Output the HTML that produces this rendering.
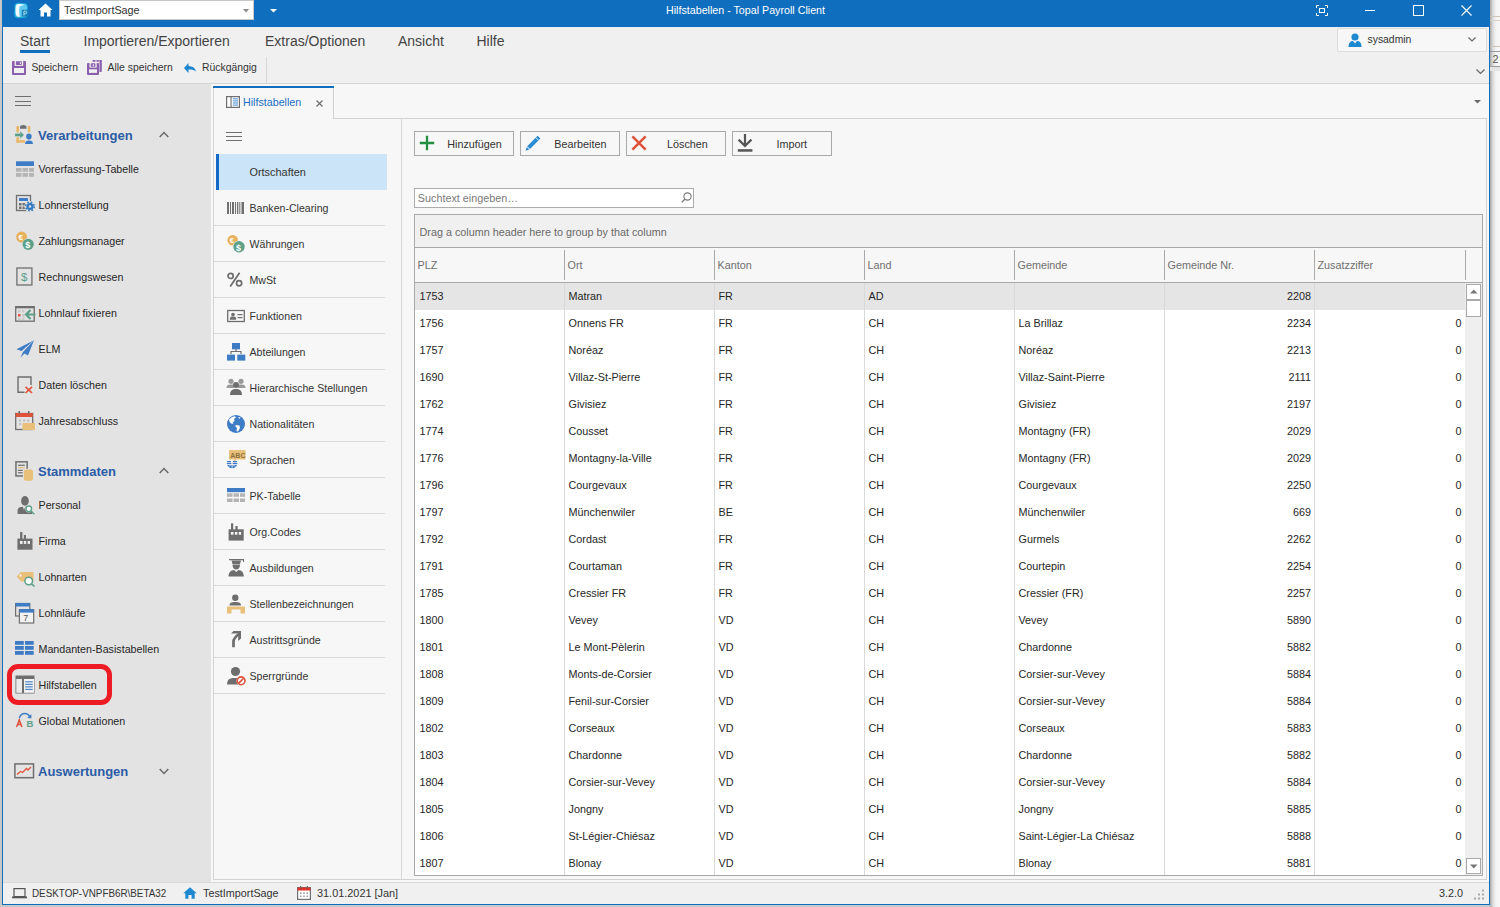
<!DOCTYPE html><html><head><meta charset="utf-8"><style>
html,body{margin:0;padding:0;width:1500px;height:907px;overflow:hidden;position:relative;font-family:"Liberation Sans",sans-serif}
.t{position:absolute;white-space:pre;line-height:1;}
svg{overflow:visible}
</style></head><body>
<div style="position:absolute;left:0px;top:0px;width:1500px;height:907px;background:#c8c8c8"></div>
<div style="position:absolute;left:1490px;top:0px;width:10px;height:907px;background:linear-gradient(to right,#a8a8a8,#dedede 3px,#f3f3f3 6px,#f8f8f8)"></div>
<div style="position:absolute;left:1490px;top:16px;width:10px;height:1px;background:#cfc6b8"></div>
<div style="position:absolute;left:1490px;top:20px;width:10px;height:1px;background:#d8d0c4"></div>
<div style="position:absolute;left:1490px;top:46px;width:10px;height:1px;background:#cfc6b8"></div>
<div style="position:absolute;left:1490px;top:51px;width:10px;height:1px;background:#9a9a9a"></div>
<div class="t" style="left:1492.5px;top:53.86px;font-size:10.8px;color:#555;font-weight:400;">2</div>
<div style="position:absolute;left:1490px;top:66px;width:10px;height:1px;background:#9a9a9a"></div>
<div style="position:absolute;left:1490px;top:67px;width:10px;height:4px;background:#e4e4e4"></div>
<div style="position:absolute;left:2px;top:0px;width:1488px;height:905px;background:#106ebe"></div>
<div style="position:absolute;left:3px;top:27px;width:1486px;height:56px;background:#f0f0f0"></div>
<div style="position:absolute;left:3px;top:83px;width:1486px;height:1px;background:#d4d4d4"></div>
<div style="position:absolute;left:3px;top:84px;width:1486px;height:798px;background:#f7f7f7"></div>
<div style="position:absolute;left:3px;top:84px;width:208px;height:798px;background:#e3e3e3"></div>
<div style="position:absolute;left:3px;top:882px;width:1486px;height:1px;background:#d9d9d9"></div>
<div style="position:absolute;left:3px;top:883px;width:1486px;height:21px;background:#f0f0f0"></div>
<svg style="position:absolute;left:13px;top:2px" width="17" height="17" viewBox="0 0 17 17"><path d="M1.5 4 C1.5 1.5 3.5 0.5 6 0.8 L12 1.2 C14 1.4 14.8 2.8 14.8 5 V12 C14.8 15 13 16 10.5 16 H5 C2.5 16 1.2 15 1.2 12 Z" fill="#1fa9de"/>
<path d="M2.5 4.5 C2.5 2.5 4 1.8 6 1.8 L11.5 2.2 C13.2 2.4 13.8 3.5 13.8 5.2 V11 C13.8 13.8 12.5 15 10 15 H5.5 C3.2 15 2.3 14 2.3 11.5 Z" fill="#62c9ef"/>
<path d="M2.8 4 C3.5 2 5 1.8 7 2 L11.5 2.8 C10 3.5 8 3.8 6.5 4.5 C6 8 6 11 6.8 14.8 C5 15 3.5 14.5 3 12.5 C2.5 10 2.5 6 2.8 4 Z" fill="#f2fbfe"/>
<rect x="8.8" y="7.8" width="6.5" height="6.8" fill="#0f7fb5"/><path d="M10.9 13.6 V9.2 H12.4 C13.3 9.2 13.7 9.8 13.7 10.5 C13.7 11.2 13.3 11.8 12.4 11.8 H10.9" stroke="#bfe6f7" stroke-width="0.9" fill="none"/></svg>
<svg style="position:absolute;left:38px;top:3px" width="15" height="14" viewBox="0 0 15 14"><path d="M7.5 0.5 L14.5 7 L12.5 7 L12.5 13.5 L9 13.5 L9 9.5 L6 9.5 L6 13.5 L2.5 13.5 L2.5 7 L0.5 7 Z" fill="#fff"/></svg>
<div style="position:absolute;left:59px;top:0px;width:195px;height:20px;background:#fff;border:1px solid #c9c9c9;box-sizing:border-box"></div>
<div class="t" style="left:64px;top:4.86px;font-size:10.8px;color:#333;font-weight:400;">TestImportSage</div>
<svg style="position:absolute;left:243px;top:9px" width="6" height="4" viewBox="0 0 6 4"><path d="M0 0 L6 0 L3 3.5 Z" fill="#8a8a8a"/></svg>
<svg style="position:absolute;left:270px;top:9px" width="7" height="4" viewBox="0 0 7 4"><path d="M0 0 L7 0 L3.5 3.5 Z" fill="#fff"/></svg>
<div class="t" style="left:666px;top:4.94px;font-size:10.7px;color:#fff;font-weight:400;">Hilfstabellen - Topal Payroll Client</div>
<svg style="position:absolute;left:1316px;top:5px" width="12" height="11" viewBox="0 0 12 11"><path d="M0.5 3V0.5H3 M9 0.5H11.5V3 M11.5 8V10.5H9 M3 10.5H0.5V8" stroke="#fff" fill="none"/><rect x="3.5" y="3.5" width="5" height="4" stroke="#fff" fill="none"/></svg>
<div style="position:absolute;left:1365px;top:10px;width:10px;height:1px;background:#fff"></div>
<svg style="position:absolute;left:1413px;top:5px" width="11" height="11" viewBox="0 0 11 11"><rect x="0.5" y="0.5" width="10" height="10" stroke="#fff" fill="none"/></svg>
<svg style="position:absolute;left:1461px;top:5px" width="11" height="11" viewBox="0 0 11 11"><path d="M0.5 0.5L10.5 10.5M10.5 0.5L0.5 10.5" stroke="#fff" stroke-width="1.1" fill="none"/></svg>
<div class="t" style="left:20px;top:34.15px;font-size:14px;color:#444;font-weight:400;">Start</div>
<div style="position:absolute;left:20px;top:50px;width:30px;height:3px;background:#106ebe"></div>
<div class="t" style="left:83.5px;top:34.15px;font-size:14px;color:#444;font-weight:400;">Importieren/Exportieren</div>
<div class="t" style="left:265px;top:34.15px;font-size:14px;color:#444;font-weight:400;">Extras/Optionen</div>
<div class="t" style="left:398px;top:34.15px;font-size:14px;color:#444;font-weight:400;">Ansicht</div>
<div class="t" style="left:476.5px;top:34.15px;font-size:14px;color:#444;font-weight:400;">Hilfe</div>
<div style="position:absolute;left:1337px;top:28px;width:150px;height:24px;background:#f7f7f7;border:1px solid #dcdcdc;box-sizing:border-box;border-radius:2px"></div>
<svg style="position:absolute;left:1348px;top:33px" width="14" height="14" viewBox="0 0 14 14"><circle cx="7" cy="4" r="3.6" fill="#1e88d0"/><path d="M0.5 14 C0.5 9 3 8 5 8 L9 8 C11 8 13.5 9 13.5 14 Z" fill="#1e88d0"/><path d="M5 8 L7 10.5 L9 8" fill="#f7f7f7"/></svg>
<div class="t" style="left:1367.5px;top:35.20px;font-size:10.4px;color:#333;font-weight:400;">sysadmin</div>
<svg style="position:absolute;left:1468px;top:37px" width="8" height="5" viewBox="0 0 8 5"><path d="M0.5 0.5 L4 4 L7.5 0.5" stroke="#666" fill="none" stroke-width="1.2"/></svg>
<svg style="position:absolute;left:12px;top:61px" width="14" height="14" viewBox="0 0 14 14"><path d="M1.5 0 H13 A1 1 0 0 1 14 1 V13 A1 1 0 0 1 13 14 H1 A1 1 0 0 1 0 13 V1 A1 1 0 0 1 1 0 Z" fill="#8c5fae"/><rect x="2.6" y="0" width="8.6" height="4.9" fill="#f0f0f0"/><rect x="3.9" y="0.3" width="5.9" height="3.6" rx="0.6" fill="#8c5fae"/><rect x="7.8" y="1.2" width="1.1" height="1.9" fill="#f0f0f0"/><rect x="2" y="7" width="10" height="5" fill="#f0f0f0"/></svg>
<div class="t" style="left:31.5px;top:63.28px;font-size:10.3px;color:#333;font-weight:400;">Speichern</div>
<svg style="position:absolute;left:87px;top:60px" width="15" height="15" viewBox="0 0 15 15"><path d="M5.6 0 H8.5 V1.8 H5.6 Z M9.5 0 H11.8 V1.8 H9.5 Z M12.3 0 H14.8 V11 A1 1 0 0 1 13.8 12 H12.5 V1.8 Z" fill="#8c5fae"/><path d="M1 3 H11 A1 1 0 0 1 12 4 V13.9 A1 1 0 0 1 11 14.9 H1 A1 1 0 0 1 0 13.9 V4 A1 1 0 0 1 1 3 Z" fill="#8c5fae"/><rect x="2.5" y="3" width="7.2" height="4.6" fill="#f0f0f0"/><rect x="3.8" y="3.3" width="4.6" height="3.5" rx="0.5" fill="#8c5fae"/><rect x="5.8" y="4.2" width="1.1" height="1.8" fill="#f0f0f0"/><rect x="2" y="9.3" width="8" height="3.6" fill="#f0f0f0"/></svg>
<div class="t" style="left:107.5px;top:63.20px;font-size:10.4px;color:#333;font-weight:400;">Alle speichern</div>
<svg style="position:absolute;left:184px;top:63px" width="12" height="10" viewBox="0 0 12 10"><path d="M0 5 L4.5 0 L4.5 3 C8 3.2 11 4.5 12 8.5 C10 6.8 7.5 6.5 4.5 6.6 L4.5 9.9 Z" fill="#1c86d0"/></svg>
<div class="t" style="left:202px;top:63.20px;font-size:10.4px;color:#333;font-weight:400;">Rückgängig</div>
<div style="position:absolute;left:266px;top:57px;width:1px;height:26px;background:#d6d6d6"></div>
<svg style="position:absolute;left:1476px;top:68.5px" width="9" height="6" viewBox="0 0 9 6"><path d="M0.5 0.5 L4.5 4.5 L8.5 0.5" stroke="#666" fill="none" stroke-width="1.2"/></svg>
<div style="position:absolute;left:15px;top:96px;width:16px;height:1px;background:#6f6f6f"></div>
<div style="position:absolute;left:15px;top:101px;width:16px;height:1px;background:#6f6f6f"></div>
<div style="position:absolute;left:15px;top:105px;width:16px;height:1px;background:#6f6f6f"></div>
<svg style="position:absolute;left:15px;top:125px" width="20" height="20" viewBox="0 0 20 20"><g fill="#e9b866"><rect x="1.4" y="1" width="2.6" height="6.3"/><rect x="1.4" y="12.3" width="2.6" height="5.3"/><rect x="1.4" y="15.1" width="8.6" height="2.5"/><rect x="12.9" y="1" width="2.4" height="6.3"/></g><path d="M5 3.7 V2 C5 0.6 6.5 -0.1 8.2 -0.1 C10 -0.1 11.5 0.6 11.5 2 V3.7 Z" fill="#6e6e6e"/><rect x="0" y="8.6" width="5.8" height="2.7" fill="#5da08a"/><path d="M5.3 6.3 L8.9 10 L5.3 13.4 Z" fill="#5da08a"/><ellipse cx="13.9" cy="11.6" rx="2.75" ry="3.05" fill="#3f7cc6"/><path d="M10 19 C10 16.5 11.5 15.5 14 15.5 C16.5 15.5 18 16.5 18 19 Z" fill="#3f7cc6"/></svg>
<div class="t" style="left:38px;top:128.80px;font-size:13px;color:#2b5ca6;font-weight:700;">Verarbeitungen</div>
<svg style="position:absolute;left:159px;top:131px" width="10" height="7" viewBox="0 0 10 7"><path d="M0.7 6 L5 1.5 L9.3 6" stroke="#6a6a6a" stroke-width="1.5" fill="none"/></svg>
<div class="t" style="left:38.5px;top:163.94px;font-size:10.7px;color:#262626;font-weight:400;">Vorerfassung-Tabelle</div>
<div class="t" style="left:38.5px;top:199.94px;font-size:10.7px;color:#262626;font-weight:400;">Lohnerstellung</div>
<div class="t" style="left:38.5px;top:235.94px;font-size:10.7px;color:#262626;font-weight:400;">Zahlungsmanager</div>
<div class="t" style="left:38.5px;top:271.94px;font-size:10.7px;color:#262626;font-weight:400;">Rechnungswesen</div>
<div class="t" style="left:38.5px;top:307.94px;font-size:10.7px;color:#262626;font-weight:400;">Lohnlauf fixieren</div>
<div class="t" style="left:38.5px;top:343.94px;font-size:10.7px;color:#262626;font-weight:400;">ELM</div>
<div class="t" style="left:38.5px;top:379.94px;font-size:10.7px;color:#262626;font-weight:400;">Daten löschen</div>
<div class="t" style="left:38.5px;top:415.94px;font-size:10.7px;color:#262626;font-weight:400;">Jahresabschluss</div>
<svg style="position:absolute;left:15px;top:160px" width="20" height="18" viewBox="0 0 20 18"><rect x="1" y="1.3" width="18" height="4.7" fill="#3f7cc6"/><g fill="#b5b5b5"><rect x="1" y="8" width="5.5" height="3.8"/><rect x="7.5" y="8" width="5.5" height="3.8"/><rect x="14" y="8" width="5" height="3.8"/><rect x="1" y="13" width="5.5" height="3.8"/><rect x="7.5" y="13" width="5.5" height="3.8"/><rect x="14" y="13" width="5" height="3.8"/></g></svg>
<svg style="position:absolute;left:15px;top:196px" width="21" height="17" viewBox="0 0 21 17"><rect x="1.5" y="-0.5" width="14" height="15" fill="none" stroke="#6e6e6e" stroke-width="1.3"/><rect x="4" y="2" width="9" height="3" fill="#3f7cc6"/><g fill="#707070"><rect x="4" y="7" width="2.5" height="2.5"/><rect x="7.5" y="7" width="2.5" height="2.5"/><rect x="4" y="10.5" width="2.5" height="2.5"/><rect x="7.5" y="10.5" width="2.5" height="2.5"/></g><rect x="10.5" y="6.5" width="2.5" height="2.5" fill="#e8b25c"/><circle cx="15" cy="10.5" r="5.6" fill="#e3e3e3"/><circle cx="15" cy="10.5" r="3.5" fill="#2f78c4"/><circle cx="15" cy="10.5" r="4.3" fill="none" stroke="#2f78c4" stroke-width="1.5" stroke-dasharray="1.7 1.7"/><circle cx="15" cy="10.5" r="1.3" fill="#e3e3e3"/></svg>
<svg style="position:absolute;left:15px;top:232px" width="20" height="20" viewBox="0 0 20 20"><circle cx="6.6" cy="5.1" r="5.5" fill="#e8b25c"/><text x="3.5" y="8.2" font-size="8" fill="#fff" font-family="Liberation Sans" font-weight="700">€</text><circle cx="13.2" cy="12.3" r="6" fill="#e3e3e3"/><circle cx="13.2" cy="12.3" r="5.6" fill="#5da08a"/><text x="10.3" y="16" font-size="9" fill="#fff" font-family="Liberation Sans" font-weight="700">$</text></svg>
<svg style="position:absolute;left:15px;top:268px" width="20" height="20" viewBox="0 0 20 20"><rect x="1.9" y="0" width="15" height="17" fill="none" stroke="#777" stroke-width="1.4"/><text x="5.9" y="13" font-size="11.5" fill="#5da08a" font-family="Liberation Sans">$</text></svg>
<svg style="position:absolute;left:15px;top:304px" width="21" height="20" viewBox="0 0 21 20"><rect x="0.7" y="2.7" width="18.5" height="14.5" fill="none" stroke="#6e6e6e" stroke-width="1.3"/><rect x="0.7" y="2.5" width="18.5" height="1.8" fill="#6e6e6e"/><g fill="#c9c9c9"><rect x="3" y="6" width="2.5" height="2.5"/><rect x="7" y="6" width="2.5" height="2.5"/><rect x="7" y="10" width="2.5" height="2.5"/><rect x="3" y="13.5" width="2.5" height="2.5"/><rect x="7" y="13.5" width="2.5" height="2.5"/></g><rect x="3" y="10" width="2.5" height="2.5" fill="#e0533a"/><path d="M20.5 10.5 H11.5 M15.5 6 L11 10.5 L15.5 15" stroke="#5da08a" stroke-width="2.2" fill="none"/></svg>
<svg style="position:absolute;left:15px;top:340px" width="20" height="19" viewBox="0 0 20 19"><path d="M19 0.3 L1.5 9.3 L6.5 11 Z" fill="#3f7cc6"/><path d="M19 0.3 L8 12 L5.5 17.6 L9.5 13.5 L13 15.5 Z" fill="#3f7cc6"/></svg>
<svg style="position:absolute;left:15px;top:376px" width="20" height="19" viewBox="0 0 20 19"><path d="M9.5 16.3 H3 V1 H16 V9" stroke="#6e6e6e" stroke-width="1.4" fill="none"/><path d="M10.5 10.8 L17 17 M17 10.8 L10.5 17" stroke="#e0533a" stroke-width="1.7"/></svg>
<svg style="position:absolute;left:15px;top:411px" width="21" height="20" viewBox="0 0 21 20"><rect x="0.7" y="2.5" width="17" height="16" fill="none" stroke="#6e6e6e" stroke-width="1.3"/><rect x="0.7" y="2" width="17" height="4" fill="#e0533a"/><rect x="3.5" y="0" width="1.5" height="3" fill="#6e6e6e"/><rect x="13" y="0" width="1.5" height="3" fill="#6e6e6e"/><g fill="#c0c0c0"><rect x="4" y="8.5" width="2.2" height="2"/><rect x="8" y="8.5" width="2.2" height="2"/><rect x="12" y="8.5" width="2.2" height="2"/><rect x="4" y="12" width="2.2" height="2"/></g><rect x="7.5" y="12" width="12.5" height="7" fill="#e9c07a"/></svg>
<svg style="position:absolute;left:15px;top:460px" width="20" height="22" viewBox="0 0 20 22"><rect x="0.95" y="1.85" width="11.2" height="14.1" fill="none" stroke="#6e6e6e" stroke-width="1.5"/><rect x="3" y="4.7" width="6.8" height="1.2" fill="#6e6e6e"/><rect x="3" y="7.1" width="6.8" height="1.2" fill="#e9c07a"/><rect x="3" y="9.8" width="4.8" height="1.2" fill="#6e6e6e"/><rect x="3" y="12.2" width="4.8" height="1.2" fill="#6e6e6e"/><rect x="8" y="8.8" width="10.8" height="12.8" rx="2" fill="#e3e3e3"/><rect x="8.9" y="9.6" width="9.1" height="11.2" rx="2" fill="#e9c07a"/></svg>
<div class="t" style="left:38px;top:465.00px;font-size:13px;color:#2b5ca6;font-weight:700;">Stammdaten</div>
<svg style="position:absolute;left:159px;top:467px" width="10" height="7" viewBox="0 0 10 7"><path d="M0.7 6 L5 1.5 L9.3 6" stroke="#6a6a6a" stroke-width="1.5" fill="none"/></svg>
<div class="t" style="left:38.5px;top:499.94px;font-size:10.7px;color:#262626;font-weight:400;">Personal</div>
<div class="t" style="left:38.5px;top:535.94px;font-size:10.7px;color:#262626;font-weight:400;">Firma</div>
<div class="t" style="left:38.5px;top:571.94px;font-size:10.7px;color:#262626;font-weight:400;">Lohnarten</div>
<div class="t" style="left:38.5px;top:607.94px;font-size:10.7px;color:#262626;font-weight:400;">Lohnläufe</div>
<div class="t" style="left:38.5px;top:643.94px;font-size:10.7px;color:#262626;font-weight:400;">Mandanten-Basistabellen</div>
<div class="t" style="left:38.5px;top:679.94px;font-size:10.7px;color:#262626;font-weight:400;">Hilfstabellen</div>
<div class="t" style="left:38.5px;top:715.94px;font-size:10.7px;color:#262626;font-weight:400;">Global Mutationen</div>
<svg style="position:absolute;left:15px;top:495px" width="21" height="21" viewBox="0 0 21 21"><ellipse cx="9.95" cy="5.9" rx="3.85" ry="4.9" fill="#6e6e6e"/><path d="M2.6 19 V15.5 C2.6 12.8 5 11.8 7.8 11.8 L9 15 L10.2 11.8 C13 11.8 17.1 12.8 17.1 15.5 V19 Z" fill="#6e6e6e"/><circle cx="13.8" cy="13.8" r="3.6" fill="#e3e3e3"/><circle cx="13.8" cy="13.8" r="2.8" fill="#fff" stroke="#5da08a" stroke-width="1.3"/><path d="M15.9 15.9 L19.3 19.3" stroke="#5da08a" stroke-width="1.4"/></svg>
<svg style="position:absolute;left:15px;top:531px" width="20" height="20" viewBox="0 0 20 20"><rect x="5.1" y="1" width="2.3" height="7" fill="#6e6e6e"/><rect x="8.9" y="4" width="2.1" height="4" fill="#6e6e6e"/><rect x="2.4" y="7.6" width="15.1" height="11.1" fill="#6e6e6e"/><rect x="4.9" y="10" width="2.7" height="2.9" fill="#eeeeee"/><rect x="8.8" y="10" width="2.4" height="2.9" fill="#eeeeee"/><rect x="12.6" y="10" width="2.4" height="2.9" fill="#eeeeee"/></svg>
<svg style="position:absolute;left:15px;top:571px" width="21" height="17" viewBox="0 0 21 17"><path d="M1.6 5.5 L6 1 H18.5 V10.5 H6 Z" fill="#e9c07a"/><circle cx="5.5" cy="4.5" r="1" fill="#fff"/><circle cx="13.7" cy="10" r="3.8" fill="#fff" stroke="#5da08a" stroke-width="1.5"/><path d="M16.3 12.6 L19.5 15.5" stroke="#5da08a" stroke-width="1.6"/></svg>
<svg style="position:absolute;left:15px;top:602px" width="20" height="22" viewBox="0 0 20 22"><rect x="0.6" y="1.5" width="14.2" height="12.5" fill="#e3e3e3" stroke="#6e6e6e" stroke-width="1.2"/><rect x="0.6" y="1" width="14.2" height="3.5" fill="#3f7cc6"/><rect x="4.4" y="7.6" width="14.3" height="13.4" fill="#f2f2f2" stroke="#6e6e6e" stroke-width="1.2"/><rect x="4.4" y="7.1" width="14.3" height="3.5" fill="#3f7cc6"/><text x="8.3" y="19.3" font-size="9" fill="#555" font-family="Liberation Sans">7</text></svg>
<svg style="position:absolute;left:15px;top:640px" width="20" height="16" viewBox="0 0 20 16"><g fill="#3f7cc6"><rect x="0" y="1" width="8.8" height="3.8"/><rect x="10" y="1" width="8.7" height="3.8"/><rect x="0" y="6" width="8.8" height="3.8"/><rect x="10" y="6" width="8.7" height="3.8"/><rect x="0" y="11" width="8.8" height="3.8"/><rect x="10" y="11" width="8.7" height="3.8"/></g></svg>
<svg style="position:absolute;left:15px;top:675px" width="20" height="19" viewBox="0 0 20 19"><rect x="0.5" y="0.5" width="19" height="18" fill="#6e6e6e"/><rect x="1.3" y="4" width="5.7" height="13.8" fill="#ebebeb"/><rect x="9" y="4" width="10" height="13.8" fill="#f2f2f2"/><g fill="#3f7cc6"><rect x="10.2" y="6.3" width="7.5" height="1.1"/><rect x="10.2" y="8.8" width="7.5" height="1.1"/><rect x="10.2" y="11.3" width="7.5" height="1.1"/><rect x="10.2" y="13.8" width="7.5" height="1.1"/></g></svg>
<svg style="position:absolute;left:15px;top:712px" width="21" height="16" viewBox="0 0 21 16"><path d="M1.6 14.9 L4.25 7.9 L6.9 14.9 M2.7 12.4 H5.8" stroke="#e0533a" stroke-width="1.5" fill="none"/><text x="11.6" y="14.8" font-size="9.6" fill="#5da08a" font-family="Liberation Sans" font-weight="700">B</text><path d="M4.3 6 C5.5 2.5 7.5 1.6 9.8 1.6 C12 1.6 13.5 2.6 14.6 4.3" stroke="#3f7cc6" stroke-width="1.5" fill="none"/><path d="M12.2 5.8 L16.5 2.2 L16.3 6.4 Z" fill="#3f7cc6"/></svg>
<div style="position:absolute;left:7px;top:664px;width:105px;height:41px;border:5px solid #ed1c24;border-radius:11px;box-sizing:border-box"></div>
<svg style="position:absolute;left:14px;top:763px" width="21" height="17" viewBox="0 0 21 17"><rect x="0.9" y="0.9" width="18.6" height="13.8" fill="none" stroke="#6e6e6e" stroke-width="1.5"/><path d="M3 11.5 L6.5 8.5 L8.5 9.5 L12.5 5.5 L14 7 L17 4" stroke="#e0533a" stroke-width="1.3" fill="none"/></svg>
<div class="t" style="left:38px;top:765.00px;font-size:13px;color:#2b5ca6;font-weight:700;">Auswertungen</div>
<svg style="position:absolute;left:159px;top:768px" width="10" height="7" viewBox="0 0 10 7"><path d="M0.7 1 L5 5.5 L9.3 1" stroke="#6a6a6a" stroke-width="1.5" fill="none"/></svg>
<div style="position:absolute;left:213px;top:118px;width:1274px;height:762px;border:1px solid #d2d2d2;box-sizing:border-box;background:#f7f7f7"></div>
<div style="position:absolute;left:213px;top:86px;width:121px;height:33px;background:#f7f7f7;border-left:1px solid #d2d2d2;border-right:1px solid #d2d2d2;box-sizing:border-box"></div>
<div style="position:absolute;left:213px;top:86px;width:121px;height:2px;background:#106ebe"></div>
<svg style="position:absolute;left:226px;top:96px" width="14" height="12" viewBox="0 0 14 12"><rect x="0.6" y="0.6" width="12.8" height="10.8" fill="#fff" stroke="#6e6e6e" stroke-width="1.2"/><rect x="4.5" y="0.6" width="1.1" height="10.8" fill="#6e6e6e"/><g fill="#3f86d6"><rect x="6.8" y="2.3" width="5.2" height="1"/><rect x="6.8" y="4.4" width="5.2" height="1"/><rect x="6.8" y="6.5" width="5.2" height="1"/><rect x="6.8" y="8.6" width="5.2" height="1"/></g></svg>
<div class="t" style="left:243px;top:96.94px;font-size:10.7px;color:#1a6fc4;font-weight:400;">Hilfstabellen</div>
<svg style="position:absolute;left:315.5px;top:100px" width="7" height="7" viewBox="0 0 7 7"><path d="M0.5 0.5 L6.5 6.5 M6.5 0.5 L0.5 6.5" stroke="#6e6e6e" stroke-width="1.2"/></svg>
<svg style="position:absolute;left:1474px;top:100px" width="7" height="4" viewBox="0 0 7 4"><path d="M0 0 H7 L3.5 3.5 Z" fill="#6a6a6a"/></svg>
<div style="position:absolute;left:401px;top:119px;width:1px;height:761px;background:#d6d6d6"></div>
<div style="position:absolute;left:226px;top:132px;width:16px;height:1px;background:#6f6f6f"></div>
<div style="position:absolute;left:226px;top:136px;width:16px;height:1px;background:#6f6f6f"></div>
<div style="position:absolute;left:226px;top:140px;width:16px;height:1px;background:#6f6f6f"></div>
<div style="position:absolute;left:216px;top:154px;width:171px;height:36px;background:#cce4f7"></div>
<div style="position:absolute;left:216px;top:154px;width:3px;height:36px;background:#1569c7"></div>
<div class="t" style="left:249.5px;top:166.77px;font-size:10.9px;color:#333;font-weight:400;">Ortschaften</div>
<div class="t" style="left:249.5px;top:203.03px;font-size:10.6px;color:#333;font-weight:400;">Banken-Clearing</div>
<div style="position:absolute;left:214px;top:225px;width:171px;height:1px;background:#d9d9d9"></div>
<div class="t" style="left:249.5px;top:239.03px;font-size:10.6px;color:#333;font-weight:400;">Währungen</div>
<div style="position:absolute;left:214px;top:261px;width:171px;height:1px;background:#d9d9d9"></div>
<div class="t" style="left:249.5px;top:275.03px;font-size:10.6px;color:#333;font-weight:400;">MwSt</div>
<div style="position:absolute;left:214px;top:297px;width:171px;height:1px;background:#d9d9d9"></div>
<div class="t" style="left:249.5px;top:311.03px;font-size:10.6px;color:#333;font-weight:400;">Funktionen</div>
<div style="position:absolute;left:214px;top:333px;width:171px;height:1px;background:#d9d9d9"></div>
<div class="t" style="left:249.5px;top:347.03px;font-size:10.6px;color:#333;font-weight:400;">Abteilungen</div>
<div style="position:absolute;left:214px;top:369px;width:171px;height:1px;background:#d9d9d9"></div>
<div class="t" style="left:249.5px;top:383.03px;font-size:10.6px;color:#333;font-weight:400;">Hierarchische Stellungen</div>
<div style="position:absolute;left:214px;top:405px;width:171px;height:1px;background:#d9d9d9"></div>
<div class="t" style="left:249.5px;top:419.03px;font-size:10.6px;color:#333;font-weight:400;">Nationalitäten</div>
<div style="position:absolute;left:214px;top:441px;width:171px;height:1px;background:#d9d9d9"></div>
<div class="t" style="left:249.5px;top:455.03px;font-size:10.6px;color:#333;font-weight:400;">Sprachen</div>
<div style="position:absolute;left:214px;top:477px;width:171px;height:1px;background:#d9d9d9"></div>
<div class="t" style="left:249.5px;top:491.03px;font-size:10.6px;color:#333;font-weight:400;">PK-Tabelle</div>
<div style="position:absolute;left:214px;top:513px;width:171px;height:1px;background:#d9d9d9"></div>
<div class="t" style="left:249.5px;top:527.03px;font-size:10.6px;color:#333;font-weight:400;">Org.Codes</div>
<div style="position:absolute;left:214px;top:549px;width:171px;height:1px;background:#d9d9d9"></div>
<div class="t" style="left:249.5px;top:563.03px;font-size:10.6px;color:#333;font-weight:400;">Ausbildungen</div>
<div style="position:absolute;left:214px;top:585px;width:171px;height:1px;background:#d9d9d9"></div>
<div class="t" style="left:249.5px;top:599.03px;font-size:10.6px;color:#333;font-weight:400;">Stellenbezeichnungen</div>
<div style="position:absolute;left:214px;top:621px;width:171px;height:1px;background:#d9d9d9"></div>
<div class="t" style="left:249.5px;top:635.03px;font-size:10.6px;color:#333;font-weight:400;">Austrittsgründe</div>
<div style="position:absolute;left:214px;top:657px;width:171px;height:1px;background:#d9d9d9"></div>
<div class="t" style="left:249.5px;top:671.03px;font-size:10.6px;color:#333;font-weight:400;">Sperrgründe</div>
<div style="position:absolute;left:214px;top:693px;width:171px;height:1px;background:#d9d9d9"></div>
<svg style="position:absolute;left:226px;top:201px" width="22" height="14" viewBox="0 0 22 14"><g fill="#707070"><rect x="1" y="1" width="2" height="12"/><rect x="4" y="1" width="1" height="12"/><rect x="6" y="1" width="2" height="12"/><rect x="9" y="1" width="1" height="12"/><rect x="11" y="1" width="1.3" height="12"/><rect x="13.3" y="1" width="1" height="12"/><rect x="15.5" y="1" width="2.5" height="12"/></g></svg>
<svg style="position:absolute;left:226px;top:234px" width="22" height="20" viewBox="0 0 22 20"><circle cx="6.7" cy="6.2" r="5.3" fill="#e8b25c"/><text x="3.8" y="9.2" font-size="7.5" fill="#fff" font-family="Liberation Sans" font-weight="700">€</text><circle cx="13" cy="12.8" r="6.2" fill="#f7f7f7"/><circle cx="13" cy="12.8" r="5.7" fill="#5da08a"/><text x="10.1" y="16.5" font-size="9" fill="#fff" font-family="Liberation Sans" font-weight="700">$</text></svg>
<svg style="position:absolute;left:226px;top:271px" width="22" height="17" viewBox="0 0 22 17"><circle cx="4.6" cy="4.9" r="2.6" fill="none" stroke="#6e6e6e" stroke-width="1.7"/><circle cx="13.1" cy="12.3" r="2.6" fill="none" stroke="#6e6e6e" stroke-width="1.7"/><path d="M13.6 1.8 L4.2 15.4" stroke="#6e6e6e" stroke-width="1.8"/></svg>
<svg style="position:absolute;left:226px;top:309px" width="22" height="14" viewBox="0 0 22 14"><rect x="1.7" y="1.5" width="16.6" height="11" fill="none" stroke="#6e6e6e" stroke-width="1.3"/><circle cx="7" cy="5.5" r="1.8" fill="#6e6e6e"/><path d="M3.8 10.8 C3.8 8 5 7.6 7 7.6 C9 7.6 10.2 8 10.2 10.8 Z" fill="#6e6e6e"/><rect x="11.5" y="5" width="5" height="1.2" fill="#6e6e6e"/><rect x="11.5" y="8" width="5" height="1.2" fill="#6e6e6e"/></svg>
<svg style="position:absolute;left:226px;top:342px" width="22" height="20" viewBox="0 0 22 20"><rect x="6" y="1" width="8" height="6.3" fill="#3f7cc6"/><path d="M10 7 V9.5 M5 12 V9.5 H15 V12" stroke="#6e6e6e" stroke-width="1.2" fill="none"/><rect x="1" y="12.6" width="8" height="6" fill="#3f7cc6"/><rect x="11.3" y="12.6" width="8" height="6" fill="#3f7cc6"/></svg>
<svg style="position:absolute;left:226px;top:378px" width="22" height="19" viewBox="0 0 22 19"><g fill="#9a9a9a"><circle cx="5" cy="3.3" r="2.6"/><path d="M0.5 10 C0.5 7 2.5 6.5 5 6.5 C7.5 6.5 8 7 8 8 L8 10 Z"/><circle cx="15" cy="3.3" r="2.6"/><path d="M19.5 10 C19.5 7 17.5 6.5 15 6.5 C12.5 6.5 12 7 12 8 L12 10 Z"/></g><g fill="#6e6e6e"><circle cx="10" cy="7" r="3"/><path d="M4 17 C4 12.5 6.5 11 10 11 C13.5 11 16 12.5 16 17 Z"/></g></svg>
<svg style="position:absolute;left:226px;top:414px" width="22" height="20" viewBox="0 0 22 20"><circle cx="10" cy="10" r="9" fill="#3f7cc6"/><path d="M3 5.5 C4.5 3.5 7 2.2 9 2.2 L10 3.5 L8 5 L8.5 7 L6.5 8.5 L7.5 10 L5 9.5 L3.5 7.5 Z M9.5 11 L13.5 11.5 L14 14 L12 17.5 L10.5 17 L11 14 L9.5 12.5 Z M12 3 L14.5 3.5 L13.5 5 Z" fill="#fff"/></svg>
<svg style="position:absolute;left:226px;top:449px" width="22" height="21" viewBox="0 0 22 21"><rect x="3" y="1" width="16.5" height="9.5" fill="#e9c07a"/><path d="M8 10.5 L7.5 13 L10.5 10.5 Z" fill="#e9c07a"/><text x="4.3" y="8.8" font-size="7" fill="#8a7040" font-family="Liberation Sans" font-weight="700">ABC</text><path d="M0.8 14 A5.3 5.3 0 0 0 11.4 14 Z" fill="#3f7cc6"/><path d="M6.1 11 V19.5 M1 15.5 H11.5 M3 17.5 L6 14.5 L9 17.5" stroke="#f7f7f7" stroke-width="0.8" fill="none"/><rect x="1" y="12" width="4" height="1.3" fill="#3f7cc6"/><rect x="7" y="12" width="4" height="1.3" fill="#3f7cc6"/></svg>
<svg style="position:absolute;left:226px;top:487px" width="22" height="16" viewBox="0 0 22 16"><rect x="1" y="1" width="18" height="4.2" fill="#3f7cc6"/><g fill="#b5b5b5"><rect x="1" y="6.3" width="5.5" height="3.5"/><rect x="7.5" y="6.3" width="5.5" height="3.5"/><rect x="14" y="6.3" width="5" height="3.5"/><rect x="1" y="11.5" width="5.5" height="3.5"/><rect x="7.5" y="11.5" width="5.5" height="3.5"/><rect x="14" y="11.5" width="5" height="3.5"/></g></svg>
<svg style="position:absolute;left:226px;top:522px" width="22" height="20" viewBox="0 0 22 20"><rect x="5" y="1.3" width="2.2" height="7" fill="#6e6e6e"/><rect x="9.4" y="4" width="2.2" height="4" fill="#6e6e6e"/><rect x="2.6" y="7.3" width="15.1" height="11.3" fill="#6e6e6e"/><rect x="4.9" y="10" width="2.6" height="2.7" fill="#f7f7f7"/><rect x="8.9" y="10" width="2.4" height="2.7" fill="#f7f7f7"/><rect x="12.7" y="10" width="2.4" height="2.7" fill="#f7f7f7"/></svg>
<svg style="position:absolute;left:226px;top:558px" width="22" height="20" viewBox="0 0 22 20"><path d="M3 1 H18 V4 H17 V2.2 H3 Z" fill="#6e6e6e"/><path d="M5.5 2.5 H15 L14 6 H6.5 Z" fill="#6e6e6e"/><path d="M6.5 6.5 C6.5 10 8 11.5 10.2 11.5 C12.4 11.5 14 10 14 6.5 Z" fill="#6e6e6e"/><path d="M2.6 18.5 C2.6 14 5 12.5 8 12 L10.2 14 L12.5 12 C15.5 12.5 17.8 14 17.8 18.5 Z" fill="#6e6e6e"/></svg>
<svg style="position:absolute;left:226px;top:594px" width="22" height="21" viewBox="0 0 22 21"><circle cx="9.3" cy="3.8" r="3.2" fill="#6e6e6e"/><path d="M3.5 11.5 C3.5 8.5 6 8 9.3 8 C12.6 8 15 8.5 15 11.5 Z" fill="#6e6e6e"/><path d="M1 12.5 H19 V19.5 H14.5 V15.5 H5.5 V19.5 H1 Z" fill="#e9c07a"/></svg>
<svg style="position:absolute;left:226px;top:630px" width="22" height="19" viewBox="0 0 22 19"><path d="M7.5 17.2 V11.5 C7.5 9 9 7 13 4" stroke="#6e6e6e" stroke-width="2.7" fill="none"/><path d="M5 3.6 L7.5 1 H15 V8.6 L12.2 11 V3.6 Z" fill="#6e6e6e"/></svg>
<svg style="position:absolute;left:226px;top:666px" width="22" height="21" viewBox="0 0 22 21"><circle cx="9.5" cy="5.5" r="4.6" fill="#6e6e6e"/><path d="M1 18.5 C1 13 4 12 9.5 12 C12 12 13 12.5 13.5 13 L12 18.5 Z" fill="#6e6e6e"/><circle cx="15.1" cy="14.8" r="4.7" fill="#f7f7f7"/><circle cx="15.1" cy="14.8" r="3.9" fill="#f7f7f7" stroke="#e0533a" stroke-width="1.6"/><path d="M12.5 17.4 L17.7 12.2" stroke="#e0533a" stroke-width="1.6"/></svg>
<div style="position:absolute;left:414px;top:131px;width:100px;height:25px;border:1px solid #a9a9a9;box-sizing:border-box;background:#f7f7f7"></div>
<svg style="position:absolute;left:419px;top:135px" width="16" height="16" viewBox="0 0 16 16"><path d="M8 0.8 V15.2 M0.8 8 H15.2" stroke="#22903f" stroke-width="2.3"/></svg>
<div class="t" style="left:447.2px;top:138.86px;font-size:10.8px;color:#333;font-weight:400;">Hinzufügen</div>
<div style="position:absolute;left:520px;top:131px;width:100px;height:25px;border:1px solid #a9a9a9;box-sizing:border-box;background:#f7f7f7"></div>
<svg style="position:absolute;left:525px;top:135px" width="16" height="17" viewBox="0 0 16 17"><path d="M12.6 0.8 L15.4 3.6 L5 14 L2.2 11.2 Z" fill="#2b8ad4"/><path d="M1.8 12 L4.3 14.5 L0.6 15.8 Z" fill="#2b8ad4"/><path d="M10.8 2.6 L13.6 5.4" stroke="#f7f7f7" stroke-width="0.9"/></svg>
<div class="t" style="left:554.3px;top:138.86px;font-size:10.8px;color:#333;font-weight:400;">Bearbeiten</div>
<div style="position:absolute;left:626px;top:131px;width:100px;height:25px;border:1px solid #a9a9a9;box-sizing:border-box;background:#f7f7f7"></div>
<svg style="position:absolute;left:631px;top:135px" width="16" height="16" viewBox="0 0 16 16"><path d="M1.4 1.4 L14.6 14.6 M14.6 1.4 L1.4 14.6" stroke="#e0533a" stroke-width="2.6"/></svg>
<div class="t" style="left:667px;top:138.86px;font-size:10.8px;color:#333;font-weight:400;">Löschen</div>
<div style="position:absolute;left:732px;top:131px;width:100px;height:25px;border:1px solid #a9a9a9;box-sizing:border-box;background:#f7f7f7"></div>
<svg style="position:absolute;left:737px;top:134px" width="16" height="18" viewBox="0 0 16 18"><path d="M8 0 V12 M1.6 5.6 L8 12 L14.4 5.6" stroke="#555" stroke-width="2.2" fill="none"/><rect x="0.8" y="15.2" width="14.6" height="2.5" fill="#555"/></svg>
<div class="t" style="left:776.5px;top:138.86px;font-size:10.8px;color:#333;font-weight:400;">Import</div>
<div style="position:absolute;left:414px;top:188px;width:280px;height:20px;border:1px solid #acacac;box-sizing:border-box;background:#fff"></div>
<div class="t" style="left:417.8px;top:192.86px;font-size:10.8px;color:#7a7a7a;font-weight:400;">Suchtext eingeben…</div>
<svg style="position:absolute;left:681px;top:192px" width="11" height="11" viewBox="0 0 11 11"><circle cx="6.5" cy="4.5" r="3.6" fill="none" stroke="#777" stroke-width="1.1"/><path d="M4 7 L0.8 10.2" stroke="#777" stroke-width="1.3"/></svg>
<div style="position:absolute;left:414px;top:214px;width:1069px;height:662px;border:1px solid #a9a9a9;box-sizing:border-box;background:#fff"></div>
<div style="position:absolute;left:415px;top:215px;width:1067px;height:32px;background:#f0f0f0"></div>
<div class="t" style="left:419.5px;top:226.86px;font-size:10.8px;color:#6a6a6a;font-weight:400;">Drag a column header here to group by that column</div>
<div style="position:absolute;left:415px;top:247px;width:1067px;height:1px;background:#a9a9a9"></div>
<div style="position:absolute;left:415px;top:248px;width:1067px;height:34px;background:#f7f7f7"></div>
<div style="position:absolute;left:415px;top:282px;width:1067px;height:1px;background:#a9a9a9"></div>
<div class="t" style="left:417.5px;top:259.86px;font-size:10.8px;color:#6f6f6f;font-weight:400;">PLZ</div>
<div class="t" style="left:567.5px;top:259.86px;font-size:10.8px;color:#6f6f6f;font-weight:400;">Ort</div>
<div class="t" style="left:717.5px;top:259.86px;font-size:10.8px;color:#6f6f6f;font-weight:400;">Kanton</div>
<div class="t" style="left:867.5px;top:259.86px;font-size:10.8px;color:#6f6f6f;font-weight:400;">Land</div>
<div class="t" style="left:1017.5px;top:259.86px;font-size:10.8px;color:#6f6f6f;font-weight:400;">Gemeinde</div>
<div class="t" style="left:1167.5px;top:259.86px;font-size:10.8px;color:#6f6f6f;font-weight:400;">Gemeinde Nr.</div>
<div class="t" style="left:1317.5px;top:259.86px;font-size:10.8px;color:#6f6f6f;font-weight:400;">Zusatzziffer</div>
<div style="position:absolute;left:564px;top:250px;width:1px;height:30px;background:#a9a9a9"></div>
<div style="position:absolute;left:714px;top:250px;width:1px;height:30px;background:#a9a9a9"></div>
<div style="position:absolute;left:864px;top:250px;width:1px;height:30px;background:#a9a9a9"></div>
<div style="position:absolute;left:1014px;top:250px;width:1px;height:30px;background:#a9a9a9"></div>
<div style="position:absolute;left:1164px;top:250px;width:1px;height:30px;background:#a9a9a9"></div>
<div style="position:absolute;left:1314px;top:250px;width:1px;height:30px;background:#a9a9a9"></div>
<div style="position:absolute;left:1465px;top:250px;width:1px;height:30px;background:#a9a9a9"></div>
<div style="position:absolute;left:415px;top:283px;width:1050px;height:27px;background:#e5e5e5"></div>
<div style="position:absolute;left:564px;top:283px;width:1px;height:592px;background:#d9d9d9"></div>
<div style="position:absolute;left:714px;top:283px;width:1px;height:592px;background:#d9d9d9"></div>
<div style="position:absolute;left:864px;top:283px;width:1px;height:592px;background:#d9d9d9"></div>
<div style="position:absolute;left:1014px;top:283px;width:1px;height:592px;background:#d9d9d9"></div>
<div style="position:absolute;left:1164px;top:283px;width:1px;height:592px;background:#d9d9d9"></div>
<div style="position:absolute;left:1314px;top:283px;width:1px;height:592px;background:#d9d9d9"></div>
<div style="position:absolute;left:1465px;top:283px;width:17px;height:592px;background:#efefef"></div>
<div style="position:absolute;left:1466px;top:284px;width:15px;height:16px;border:1px solid #a9a9a9;box-sizing:border-box;background:#fff"></div>
<svg style="position:absolute;left:1470px;top:288.6px" width="8" height="5" viewBox="0 0 8 5"><path d="M0 4.5 H7.5 L3.75 0.5 Z" fill="#777"/></svg>
<div style="position:absolute;left:1466px;top:300px;width:15px;height:17px;border:1px solid #a9a9a9;box-sizing:border-box;background:#fff"></div>
<div style="position:absolute;left:1466px;top:858px;width:15px;height:16px;border:1px solid #a9a9a9;box-sizing:border-box;background:#fff"></div>
<svg style="position:absolute;left:1470px;top:864px" width="8" height="5" viewBox="0 0 8 5"><path d="M0 0.5 H7.5 L3.75 4.5 Z" fill="#777"/></svg>
<div style="position:absolute;left:0;top:0;width:1500px;height:875px;overflow:hidden"><div class="t" style="left:419.5px;top:290.86px;font-size:10.8px;color:#262626;font-weight:400;">1753</div><div class="t" style="left:568.5px;top:290.86px;font-size:10.8px;color:#262626;font-weight:400;">Matran</div><div class="t" style="left:718.5px;top:290.86px;font-size:10.8px;color:#262626;font-weight:400;">FR</div><div class="t" style="left:868.5px;top:290.86px;font-size:10.8px;color:#262626;font-weight:400;">AD</div><div class="t" style="right:189px;top:290.86px;font-size:10.8px;color:#262626;text-align:right">2208</div><div class="t" style="left:419.5px;top:317.86px;font-size:10.8px;color:#262626;font-weight:400;">1756</div><div class="t" style="left:568.5px;top:317.86px;font-size:10.8px;color:#262626;font-weight:400;">Onnens FR</div><div class="t" style="left:718.5px;top:317.86px;font-size:10.8px;color:#262626;font-weight:400;">FR</div><div class="t" style="left:868.5px;top:317.86px;font-size:10.8px;color:#262626;font-weight:400;">CH</div><div class="t" style="left:1018.5px;top:317.86px;font-size:10.8px;color:#262626;font-weight:400;">La Brillaz</div><div class="t" style="right:189px;top:317.86px;font-size:10.8px;color:#262626;text-align:right">2234</div><div class="t" style="right:38.5px;top:317.86px;font-size:10.8px;color:#262626;text-align:right">0</div><div class="t" style="left:419.5px;top:344.86px;font-size:10.8px;color:#262626;font-weight:400;">1757</div><div class="t" style="left:568.5px;top:344.86px;font-size:10.8px;color:#262626;font-weight:400;">Noréaz</div><div class="t" style="left:718.5px;top:344.86px;font-size:10.8px;color:#262626;font-weight:400;">FR</div><div class="t" style="left:868.5px;top:344.86px;font-size:10.8px;color:#262626;font-weight:400;">CH</div><div class="t" style="left:1018.5px;top:344.86px;font-size:10.8px;color:#262626;font-weight:400;">Noréaz</div><div class="t" style="right:189px;top:344.86px;font-size:10.8px;color:#262626;text-align:right">2213</div><div class="t" style="right:38.5px;top:344.86px;font-size:10.8px;color:#262626;text-align:right">0</div><div class="t" style="left:419.5px;top:371.86px;font-size:10.8px;color:#262626;font-weight:400;">1690</div><div class="t" style="left:568.5px;top:371.86px;font-size:10.8px;color:#262626;font-weight:400;">Villaz-St-Pierre</div><div class="t" style="left:718.5px;top:371.86px;font-size:10.8px;color:#262626;font-weight:400;">FR</div><div class="t" style="left:868.5px;top:371.86px;font-size:10.8px;color:#262626;font-weight:400;">CH</div><div class="t" style="left:1018.5px;top:371.86px;font-size:10.8px;color:#262626;font-weight:400;">Villaz-Saint-Pierre</div><div class="t" style="right:189px;top:371.86px;font-size:10.8px;color:#262626;text-align:right">2111</div><div class="t" style="right:38.5px;top:371.86px;font-size:10.8px;color:#262626;text-align:right">0</div><div class="t" style="left:419.5px;top:398.86px;font-size:10.8px;color:#262626;font-weight:400;">1762</div><div class="t" style="left:568.5px;top:398.86px;font-size:10.8px;color:#262626;font-weight:400;">Givisiez</div><div class="t" style="left:718.5px;top:398.86px;font-size:10.8px;color:#262626;font-weight:400;">FR</div><div class="t" style="left:868.5px;top:398.86px;font-size:10.8px;color:#262626;font-weight:400;">CH</div><div class="t" style="left:1018.5px;top:398.86px;font-size:10.8px;color:#262626;font-weight:400;">Givisiez</div><div class="t" style="right:189px;top:398.86px;font-size:10.8px;color:#262626;text-align:right">2197</div><div class="t" style="right:38.5px;top:398.86px;font-size:10.8px;color:#262626;text-align:right">0</div><div class="t" style="left:419.5px;top:425.86px;font-size:10.8px;color:#262626;font-weight:400;">1774</div><div class="t" style="left:568.5px;top:425.86px;font-size:10.8px;color:#262626;font-weight:400;">Cousset</div><div class="t" style="left:718.5px;top:425.86px;font-size:10.8px;color:#262626;font-weight:400;">FR</div><div class="t" style="left:868.5px;top:425.86px;font-size:10.8px;color:#262626;font-weight:400;">CH</div><div class="t" style="left:1018.5px;top:425.86px;font-size:10.8px;color:#262626;font-weight:400;">Montagny (FR)</div><div class="t" style="right:189px;top:425.86px;font-size:10.8px;color:#262626;text-align:right">2029</div><div class="t" style="right:38.5px;top:425.86px;font-size:10.8px;color:#262626;text-align:right">0</div><div class="t" style="left:419.5px;top:452.86px;font-size:10.8px;color:#262626;font-weight:400;">1776</div><div class="t" style="left:568.5px;top:452.86px;font-size:10.8px;color:#262626;font-weight:400;">Montagny-la-Ville</div><div class="t" style="left:718.5px;top:452.86px;font-size:10.8px;color:#262626;font-weight:400;">FR</div><div class="t" style="left:868.5px;top:452.86px;font-size:10.8px;color:#262626;font-weight:400;">CH</div><div class="t" style="left:1018.5px;top:452.86px;font-size:10.8px;color:#262626;font-weight:400;">Montagny (FR)</div><div class="t" style="right:189px;top:452.86px;font-size:10.8px;color:#262626;text-align:right">2029</div><div class="t" style="right:38.5px;top:452.86px;font-size:10.8px;color:#262626;text-align:right">0</div><div class="t" style="left:419.5px;top:479.86px;font-size:10.8px;color:#262626;font-weight:400;">1796</div><div class="t" style="left:568.5px;top:479.86px;font-size:10.8px;color:#262626;font-weight:400;">Courgevaux</div><div class="t" style="left:718.5px;top:479.86px;font-size:10.8px;color:#262626;font-weight:400;">FR</div><div class="t" style="left:868.5px;top:479.86px;font-size:10.8px;color:#262626;font-weight:400;">CH</div><div class="t" style="left:1018.5px;top:479.86px;font-size:10.8px;color:#262626;font-weight:400;">Courgevaux</div><div class="t" style="right:189px;top:479.86px;font-size:10.8px;color:#262626;text-align:right">2250</div><div class="t" style="right:38.5px;top:479.86px;font-size:10.8px;color:#262626;text-align:right">0</div><div class="t" style="left:419.5px;top:506.86px;font-size:10.8px;color:#262626;font-weight:400;">1797</div><div class="t" style="left:568.5px;top:506.86px;font-size:10.8px;color:#262626;font-weight:400;">Münchenwiler</div><div class="t" style="left:718.5px;top:506.86px;font-size:10.8px;color:#262626;font-weight:400;">BE</div><div class="t" style="left:868.5px;top:506.86px;font-size:10.8px;color:#262626;font-weight:400;">CH</div><div class="t" style="left:1018.5px;top:506.86px;font-size:10.8px;color:#262626;font-weight:400;">Münchenwiler</div><div class="t" style="right:189px;top:506.86px;font-size:10.8px;color:#262626;text-align:right">669</div><div class="t" style="right:38.5px;top:506.86px;font-size:10.8px;color:#262626;text-align:right">0</div><div class="t" style="left:419.5px;top:533.86px;font-size:10.8px;color:#262626;font-weight:400;">1792</div><div class="t" style="left:568.5px;top:533.86px;font-size:10.8px;color:#262626;font-weight:400;">Cordast</div><div class="t" style="left:718.5px;top:533.86px;font-size:10.8px;color:#262626;font-weight:400;">FR</div><div class="t" style="left:868.5px;top:533.86px;font-size:10.8px;color:#262626;font-weight:400;">CH</div><div class="t" style="left:1018.5px;top:533.86px;font-size:10.8px;color:#262626;font-weight:400;">Gurmels</div><div class="t" style="right:189px;top:533.86px;font-size:10.8px;color:#262626;text-align:right">2262</div><div class="t" style="right:38.5px;top:533.86px;font-size:10.8px;color:#262626;text-align:right">0</div><div class="t" style="left:419.5px;top:560.86px;font-size:10.8px;color:#262626;font-weight:400;">1791</div><div class="t" style="left:568.5px;top:560.86px;font-size:10.8px;color:#262626;font-weight:400;">Courtaman</div><div class="t" style="left:718.5px;top:560.86px;font-size:10.8px;color:#262626;font-weight:400;">FR</div><div class="t" style="left:868.5px;top:560.86px;font-size:10.8px;color:#262626;font-weight:400;">CH</div><div class="t" style="left:1018.5px;top:560.86px;font-size:10.8px;color:#262626;font-weight:400;">Courtepin</div><div class="t" style="right:189px;top:560.86px;font-size:10.8px;color:#262626;text-align:right">2254</div><div class="t" style="right:38.5px;top:560.86px;font-size:10.8px;color:#262626;text-align:right">0</div><div class="t" style="left:419.5px;top:587.86px;font-size:10.8px;color:#262626;font-weight:400;">1785</div><div class="t" style="left:568.5px;top:587.86px;font-size:10.8px;color:#262626;font-weight:400;">Cressier FR</div><div class="t" style="left:718.5px;top:587.86px;font-size:10.8px;color:#262626;font-weight:400;">FR</div><div class="t" style="left:868.5px;top:587.86px;font-size:10.8px;color:#262626;font-weight:400;">CH</div><div class="t" style="left:1018.5px;top:587.86px;font-size:10.8px;color:#262626;font-weight:400;">Cressier (FR)</div><div class="t" style="right:189px;top:587.86px;font-size:10.8px;color:#262626;text-align:right">2257</div><div class="t" style="right:38.5px;top:587.86px;font-size:10.8px;color:#262626;text-align:right">0</div><div class="t" style="left:419.5px;top:614.86px;font-size:10.8px;color:#262626;font-weight:400;">1800</div><div class="t" style="left:568.5px;top:614.86px;font-size:10.8px;color:#262626;font-weight:400;">Vevey</div><div class="t" style="left:718.5px;top:614.86px;font-size:10.8px;color:#262626;font-weight:400;">VD</div><div class="t" style="left:868.5px;top:614.86px;font-size:10.8px;color:#262626;font-weight:400;">CH</div><div class="t" style="left:1018.5px;top:614.86px;font-size:10.8px;color:#262626;font-weight:400;">Vevey</div><div class="t" style="right:189px;top:614.86px;font-size:10.8px;color:#262626;text-align:right">5890</div><div class="t" style="right:38.5px;top:614.86px;font-size:10.8px;color:#262626;text-align:right">0</div><div class="t" style="left:419.5px;top:641.86px;font-size:10.8px;color:#262626;font-weight:400;">1801</div><div class="t" style="left:568.5px;top:641.86px;font-size:10.8px;color:#262626;font-weight:400;">Le Mont-Pèlerin</div><div class="t" style="left:718.5px;top:641.86px;font-size:10.8px;color:#262626;font-weight:400;">VD</div><div class="t" style="left:868.5px;top:641.86px;font-size:10.8px;color:#262626;font-weight:400;">CH</div><div class="t" style="left:1018.5px;top:641.86px;font-size:10.8px;color:#262626;font-weight:400;">Chardonne</div><div class="t" style="right:189px;top:641.86px;font-size:10.8px;color:#262626;text-align:right">5882</div><div class="t" style="right:38.5px;top:641.86px;font-size:10.8px;color:#262626;text-align:right">0</div><div class="t" style="left:419.5px;top:668.86px;font-size:10.8px;color:#262626;font-weight:400;">1808</div><div class="t" style="left:568.5px;top:668.86px;font-size:10.8px;color:#262626;font-weight:400;">Monts-de-Corsier</div><div class="t" style="left:718.5px;top:668.86px;font-size:10.8px;color:#262626;font-weight:400;">VD</div><div class="t" style="left:868.5px;top:668.86px;font-size:10.8px;color:#262626;font-weight:400;">CH</div><div class="t" style="left:1018.5px;top:668.86px;font-size:10.8px;color:#262626;font-weight:400;">Corsier-sur-Vevey</div><div class="t" style="right:189px;top:668.86px;font-size:10.8px;color:#262626;text-align:right">5884</div><div class="t" style="right:38.5px;top:668.86px;font-size:10.8px;color:#262626;text-align:right">0</div><div class="t" style="left:419.5px;top:695.86px;font-size:10.8px;color:#262626;font-weight:400;">1809</div><div class="t" style="left:568.5px;top:695.86px;font-size:10.8px;color:#262626;font-weight:400;">Fenil-sur-Corsier</div><div class="t" style="left:718.5px;top:695.86px;font-size:10.8px;color:#262626;font-weight:400;">VD</div><div class="t" style="left:868.5px;top:695.86px;font-size:10.8px;color:#262626;font-weight:400;">CH</div><div class="t" style="left:1018.5px;top:695.86px;font-size:10.8px;color:#262626;font-weight:400;">Corsier-sur-Vevey</div><div class="t" style="right:189px;top:695.86px;font-size:10.8px;color:#262626;text-align:right">5884</div><div class="t" style="right:38.5px;top:695.86px;font-size:10.8px;color:#262626;text-align:right">0</div><div class="t" style="left:419.5px;top:722.86px;font-size:10.8px;color:#262626;font-weight:400;">1802</div><div class="t" style="left:568.5px;top:722.86px;font-size:10.8px;color:#262626;font-weight:400;">Corseaux</div><div class="t" style="left:718.5px;top:722.86px;font-size:10.8px;color:#262626;font-weight:400;">VD</div><div class="t" style="left:868.5px;top:722.86px;font-size:10.8px;color:#262626;font-weight:400;">CH</div><div class="t" style="left:1018.5px;top:722.86px;font-size:10.8px;color:#262626;font-weight:400;">Corseaux</div><div class="t" style="right:189px;top:722.86px;font-size:10.8px;color:#262626;text-align:right">5883</div><div class="t" style="right:38.5px;top:722.86px;font-size:10.8px;color:#262626;text-align:right">0</div><div class="t" style="left:419.5px;top:749.86px;font-size:10.8px;color:#262626;font-weight:400;">1803</div><div class="t" style="left:568.5px;top:749.86px;font-size:10.8px;color:#262626;font-weight:400;">Chardonne</div><div class="t" style="left:718.5px;top:749.86px;font-size:10.8px;color:#262626;font-weight:400;">VD</div><div class="t" style="left:868.5px;top:749.86px;font-size:10.8px;color:#262626;font-weight:400;">CH</div><div class="t" style="left:1018.5px;top:749.86px;font-size:10.8px;color:#262626;font-weight:400;">Chardonne</div><div class="t" style="right:189px;top:749.86px;font-size:10.8px;color:#262626;text-align:right">5882</div><div class="t" style="right:38.5px;top:749.86px;font-size:10.8px;color:#262626;text-align:right">0</div><div class="t" style="left:419.5px;top:776.86px;font-size:10.8px;color:#262626;font-weight:400;">1804</div><div class="t" style="left:568.5px;top:776.86px;font-size:10.8px;color:#262626;font-weight:400;">Corsier-sur-Vevey</div><div class="t" style="left:718.5px;top:776.86px;font-size:10.8px;color:#262626;font-weight:400;">VD</div><div class="t" style="left:868.5px;top:776.86px;font-size:10.8px;color:#262626;font-weight:400;">CH</div><div class="t" style="left:1018.5px;top:776.86px;font-size:10.8px;color:#262626;font-weight:400;">Corsier-sur-Vevey</div><div class="t" style="right:189px;top:776.86px;font-size:10.8px;color:#262626;text-align:right">5884</div><div class="t" style="right:38.5px;top:776.86px;font-size:10.8px;color:#262626;text-align:right">0</div><div class="t" style="left:419.5px;top:803.86px;font-size:10.8px;color:#262626;font-weight:400;">1805</div><div class="t" style="left:568.5px;top:803.86px;font-size:10.8px;color:#262626;font-weight:400;">Jongny</div><div class="t" style="left:718.5px;top:803.86px;font-size:10.8px;color:#262626;font-weight:400;">VD</div><div class="t" style="left:868.5px;top:803.86px;font-size:10.8px;color:#262626;font-weight:400;">CH</div><div class="t" style="left:1018.5px;top:803.86px;font-size:10.8px;color:#262626;font-weight:400;">Jongny</div><div class="t" style="right:189px;top:803.86px;font-size:10.8px;color:#262626;text-align:right">5885</div><div class="t" style="right:38.5px;top:803.86px;font-size:10.8px;color:#262626;text-align:right">0</div><div class="t" style="left:419.5px;top:830.86px;font-size:10.8px;color:#262626;font-weight:400;">1806</div><div class="t" style="left:568.5px;top:830.86px;font-size:10.8px;color:#262626;font-weight:400;">St-Légier-Chiésaz</div><div class="t" style="left:718.5px;top:830.86px;font-size:10.8px;color:#262626;font-weight:400;">VD</div><div class="t" style="left:868.5px;top:830.86px;font-size:10.8px;color:#262626;font-weight:400;">CH</div><div class="t" style="left:1018.5px;top:830.86px;font-size:10.8px;color:#262626;font-weight:400;">Saint-Légier-La Chiésaz</div><div class="t" style="right:189px;top:830.86px;font-size:10.8px;color:#262626;text-align:right">5888</div><div class="t" style="right:38.5px;top:830.86px;font-size:10.8px;color:#262626;text-align:right">0</div><div class="t" style="left:419.5px;top:857.86px;font-size:10.8px;color:#262626;font-weight:400;">1807</div><div class="t" style="left:568.5px;top:857.86px;font-size:10.8px;color:#262626;font-weight:400;">Blonay</div><div class="t" style="left:718.5px;top:857.86px;font-size:10.8px;color:#262626;font-weight:400;">VD</div><div class="t" style="left:868.5px;top:857.86px;font-size:10.8px;color:#262626;font-weight:400;">CH</div><div class="t" style="left:1018.5px;top:857.86px;font-size:10.8px;color:#262626;font-weight:400;">Blonay</div><div class="t" style="right:189px;top:857.86px;font-size:10.8px;color:#262626;text-align:right">5881</div><div class="t" style="right:38.5px;top:857.86px;font-size:10.8px;color:#262626;text-align:right">0</div></div>
<svg style="position:absolute;left:12px;top:888px" width="15" height="11" viewBox="0 0 15 11"><rect x="2" y="0.6" width="11" height="8" fill="none" stroke="#555" stroke-width="1.2"/><rect x="0" y="8.5" width="15" height="1.8" fill="#555"/></svg>
<div class="t" style="left:31.7px;top:887.69px;font-size:11px;color:#333;font-weight:400;transform:scaleX(0.895);transform-origin:0 0">DESKTOP-VNPFB6R\BETA32</div>
<svg style="position:absolute;left:183px;top:887px" width="14" height="12" viewBox="0 0 14 12"><path d="M7 0.3 L13.7 6.3 L11.7 6.3 L11.7 11.7 L8.6 11.7 L8.6 8 L5.4 8 L5.4 11.7 L2.3 11.7 L2.3 6.3 L0.3 6.3 Z" fill="#1e88d0"/></svg>
<div class="t" style="left:203px;top:887.86px;font-size:10.8px;color:#333;font-weight:400;">TestImportSage</div>
<svg style="position:absolute;left:297px;top:886px" width="14" height="14" viewBox="0 0 14 14"><rect x="0.6" y="1.6" width="12.8" height="11.8" fill="#fff" stroke="#6e6e6e" stroke-width="1.2"/><rect x="0.6" y="1.5" width="12.8" height="3" fill="#e0312a"/><rect x="3" y="0" width="1.3" height="2.5" fill="#6e6e6e"/><rect x="9.7" y="0" width="1.3" height="2.5" fill="#6e6e6e"/><g fill="#9a9a9a"><rect x="3" y="6.5" width="1.6" height="1.5"/><rect x="6.2" y="6.5" width="1.6" height="1.5"/><rect x="9.4" y="6.5" width="1.6" height="1.5"/><rect x="3" y="9.5" width="1.6" height="1.5"/><rect x="6.2" y="9.5" width="1.6" height="1.5"/><rect x="9.4" y="9.5" width="1.6" height="1.5"/></g></svg>
<div class="t" style="left:317px;top:887.77px;font-size:10.9px;color:#333;font-weight:400;">31.01.2021 [Jan]</div>
<div class="t" style="right:37px;top:887.86px;font-size:10.8px;color:#333;text-align:right">3.2.0</div>
<svg style="position:absolute;left:1475px;top:889px" width="10" height="11" viewBox="0 0 10 11"><g fill="#a9a9a9"><rect x="7" y="0.5" width="2" height="2"/><rect x="3" y="4.5" width="2" height="2"/><rect x="7" y="4.5" width="2" height="2"/><rect x="-1" y="8.5" width="2" height="2"/><rect x="3" y="8.5" width="2" height="2"/><rect x="7" y="8.5" width="2" height="2"/></g></svg>
</body></html>
